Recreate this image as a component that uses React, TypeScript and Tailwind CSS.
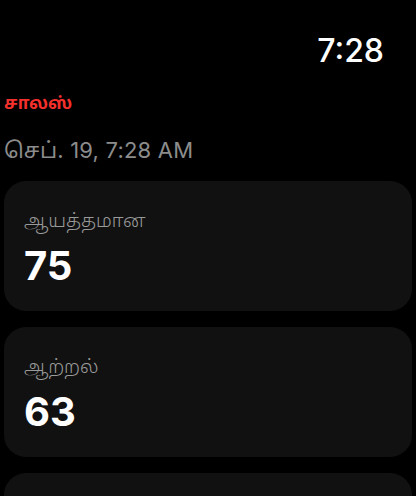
export default function App() {
  const metrics = [
    { label: 'ஆயத்தமான', value: '75' },
    { label: 'ஆற்றல்', value: '63' },
    { label: '', value: '' },
  ];

  return (
    <div
      className="w-[416px] h-[496px] bg-black overflow-hidden flex flex-col"
      style={{ fontFamily: 'Inter, "Noto Sans", "Noto Sans Tamil", sans-serif' }}
    >
      {/* Status bar */}
      <div className="flex justify-end pr-[32px] pt-[32px] h-[76px]">
        <span className="text-white text-[32px] leading-[38px] font-medium">7:28</span>
      </div>

      {/* Title */}
      <div className="px-[4px] pt-[22px]">
        <h1 className="text-[#f4302c] text-[17px] leading-[22px] font-bold">சாலஸ்</h1>
        <p className="text-[#8c8c8c] text-[22px] leading-[28px] mt-[22px] tracking-[0.2px]">செப். 19, 7:28 AM</p>
      </div>

      {/* Metric cards */}
      <div className="flex flex-col gap-[16px] px-[4px] mt-[17px]">
        {metrics.map((m, i) => (
          <div key={i} className="h-[130px] shrink-0 rounded-[22px] bg-[#111111] px-[20px] pt-[27px]">
            <div className="text-[#9a9a9a] text-[19px] leading-[26px] font-light">{m.label}</div>
            <div className="text-white text-[40px] leading-[48px] font-bold mt-[8px]">{m.value}</div>
          </div>
        ))}
      </div>
    </div>
  );
}
